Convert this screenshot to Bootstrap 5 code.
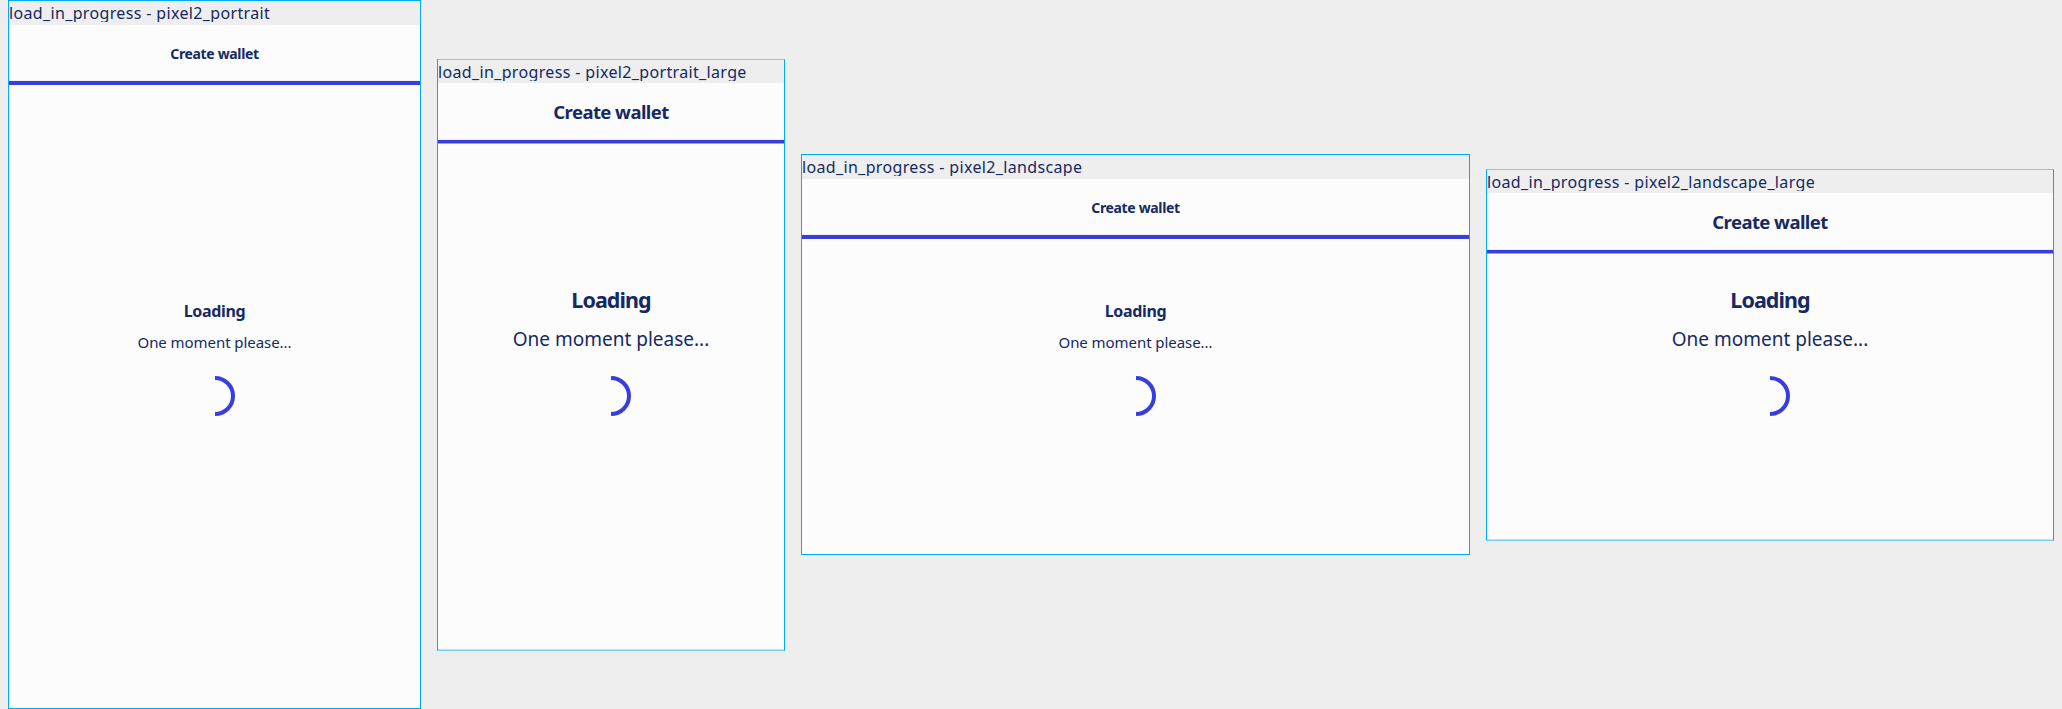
<!DOCTYPE html>
<html lang="en">
<head>
<meta charset="utf-8">
<meta name="viewport" content="width=device-width, initial-scale=1">
<title>load_in_progress</title>
<link href="https://cdn.jsdelivr.net/npm/bootstrap@5.3.0/dist/css/bootstrap.min.css" rel="stylesheet">
<style>
body{background:#eee;color:#152a62;font-family:"Noto Sans",sans-serif;height:709px;overflow:hidden}
.board{height:709px;padding-left:8px;gap:16px}
.device{border:1px solid #03a9f4;background:#fcfcfc}
.d1{width:413px;height:709px}
.d2{width:348px;height:592px;margin-top:59px}
.d3{width:669px;height:401px;margin-top:154px}
.d4{width:568px;height:372px;margin-top:169px}
.soft{border-top-color:#78cbf2;border-bottom-color:#78cbf2;box-shadow:inset 0 -1px #bce4f9}
.tag{background:#eee;height:24px;white-space:nowrap;line-height:25px;font-size:16px;letter-spacing:.35px}
.tag span{display:inline-block;height:21px;overflow:hidden;vertical-align:top}
.soft .tag{height:23px}
.bar{height:60px;border-bottom:4px solid #383ede;box-shadow:inset 0 -1px #eee;font-weight:700;font-size:14px;line-height:20px;padding-top:2px;letter-spacing:-.34px}
.soft .bar{font-size:18.5px;letter-spacing:-.56px;border-bottom-width:3px;padding-top:0;box-shadow:inset 0 -1px #eee,0 1px #9b9eee}
.msg{font-size:15px}
.msg h2{font-size:16px;font-weight:700;line-height:22px;margin:0;letter-spacing:-.35px}
.msg p{line-height:22px;margin:9px 0 23px;letter-spacing:-.06px}
.soft .msg h2{font-size:21.5px;letter-spacing:-.95px}
.soft .msg p{font-size:19px;letter-spacing:0;margin:17px 0 26px}
.g1{padding-top:215px}.g3{padding-top:61px}.g2{padding-top:146px}.g4{padding-top:36px}
.msg svg{display:block;width:40px;height:40px}
</style>
</head>
<body>
<main class="board d-flex align-items-start">
<section class="device d1 flex-shrink-0"><div class="tag"><span>load_in_progress - pixel2_portrait</span></div><header class="bar d-flex align-items-center justify-content-center"><span>Create wallet</span></header><div class="msg g1 d-flex flex-column align-items-center"><h2><span>Loading</span></h2><p><span>One moment please...</span></p><svg viewBox="0 0 40 40"><path d="M20 2a18 18 0 0 1 0 36" fill="none" stroke="#383ede" stroke-width="4"/></svg></div></section>
<section class="device d2 soft flex-shrink-0"><div class="tag"><span>load_in_progress - pixel2_portrait_large</span></div><header class="bar d-flex align-items-center justify-content-center"><span>Create wallet</span></header><div class="msg g2 d-flex flex-column align-items-center"><h2><span>Loading</span></h2><p><span>One moment please...</span></p><svg viewBox="0 0 40 40"><path d="M20 2a18 18 0 0 1 0 36" fill="none" stroke="#383ede" stroke-width="4"/></svg></div></section>
<section class="device d3 flex-shrink-0"><div class="tag"><span>load_in_progress - pixel2_landscape</span></div><header class="bar d-flex align-items-center justify-content-center"><span>Create wallet</span></header><div class="msg g3 d-flex flex-column align-items-center"><h2><span>Loading</span></h2><p><span>One moment please...</span></p><svg viewBox="0 0 40 40"><path d="M20 2a18 18 0 0 1 0 36" fill="none" stroke="#383ede" stroke-width="4"/></svg></div></section>
<section class="device d4 soft flex-shrink-0"><div class="tag"><span>load_in_progress - pixel2_landscape_large</span></div><header class="bar d-flex align-items-center justify-content-center"><span>Create wallet</span></header><div class="msg g4 d-flex flex-column align-items-center"><h2><span>Loading</span></h2><p><span>One moment please...</span></p><svg viewBox="0 0 40 40"><path d="M20 2a18 18 0 0 1 0 36" fill="none" stroke="#383ede" stroke-width="4"/></svg></div></section>
</main>
<script src="https://cdn.jsdelivr.net/npm/bootstrap@5.3.0/dist/js/bootstrap.bundle.min.js"></script>
</body>
</html>
